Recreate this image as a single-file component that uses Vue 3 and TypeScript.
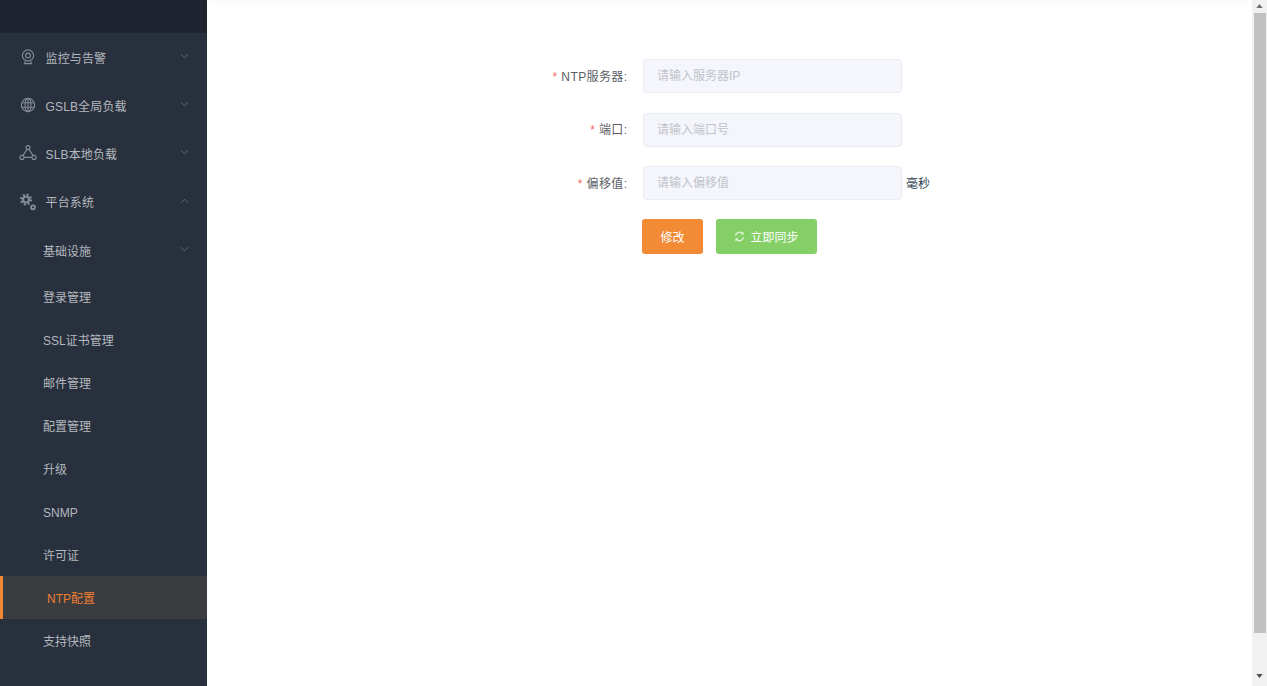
<script setup lang="ts">
interface Top { label: string; icon: string; open?: boolean }
const tops: Top[] = [
  { label: '监控与告警', icon: 'cam' },
  { label: 'GSLB全局负载', icon: 'globe' },
  { label: 'SLB本地负载', icon: 'nodes' },
  { label: '平台系统', icon: 'gear', open: true },
]
const subs = ['登录管理', 'SSL证书管理', '邮件管理', '配置管理', '升级', 'SNMP', '许可证', 'NTP配置', '支持快照']
const fields = [
  { label: 'NTP服务器:', ph: '请输入服务器IP' },
  { label: '端口:', ph: '请输入端口号' },
  { label: '偏移值:', ph: '请输入偏移值', suffix: '毫秒' },
]
</script>

<template>
  <div class="page">
    <aside class="side">
      <div class="brand"></div>
      <div v-for="t in tops" :key="t.label" class="top">
        <svg class="ico" viewBox="0 0 18 18" fill="none" stroke="#858c97" stroke-width="1.1">
          <template v-if="t.icon === 'cam'">
            <circle cx="9" cy="7.5" r="5.6" />
            <circle cx="9" cy="7.5" r="2.4" />
            <path d="M6 13v2.6h6V13M4.8 15.8h8.4" />
          </template>
          <template v-else-if="t.icon === 'globe'">
            <circle cx="9" cy="9" r="6.6" />
            <ellipse cx="9" cy="9" rx="3" ry="6.6" />
            <path d="M2.6 6.8h12.8M2.6 11.2h12.8M9 2.4v13.2" />
          </template>
          <template v-else-if="t.icon === 'nodes'">
            <circle cx="9" cy="3.6" r="2" />
            <circle cx="3" cy="13.4" r="2" />
            <circle cx="15" cy="13.4" r="2" />
            <path d="M8 5.4 3.9 11.6M10 5.4l4.1 6.2M5 13.4h8" />
          </template>
          <template v-else>
            <circle cx="7" cy="6.5" r="5" stroke-width="2" stroke-dasharray="2 1.93" />
            <circle cx="7" cy="6.5" r="3" stroke-width="2.2" />
            <circle cx="14" cy="14.3" r="2" stroke-width="1.7" />
          </template>
        </svg>
        <span class="top-label">{{ t.label }}</span>
        <svg class="chev" :class="{ up: t.open }" viewBox="0 0 10 6" fill="none" stroke="#69707b" stroke-width="1">
          <path d="M1 1l4 4 4-4" />
        </svg>
      </div>
      <div class="top sub-head">
        <span class="sub-label">基础设施</span>
        <svg class="chev" viewBox="0 0 10 6" fill="none" stroke="#69707b" stroke-width="1">
          <path d="M1 1l4 4 4-4" />
        </svg>
      </div>
      <div v-for="s in subs" :key="s" class="sub" :class="{ active: s === 'NTP配置' }">{{ s }}</div>
    </aside>

    <main class="main">
      <div class="topbar"></div>
      <form class="form" @submit.prevent>
        <div v-for="f in fields" :key="f.label" class="row">
          <label class="lbl"><i>*</i> {{ f.label }}</label>
          <input class="inp" :placeholder="f.ph" />
          <span v-if="f.suffix" class="suffix">{{ f.suffix }}</span>
        </div>
        <div class="btns">
          <button type="button" class="btn orange">修改</button>
          <button type="button" class="btn green">
            <svg class="sync" viewBox="0 0 12 12" fill="none" stroke="#e4f5df" stroke-width="1.3">
              <path d="M1.6 5.2A4.5 4.5 0 0 1 9.6 3.1M10.4 6.8A4.5 4.5 0 0 1 2.4 8.9" />
              <path d="M10 .9v2.6H7.4M2 11.1V8.5h2.6" stroke-width="1" />
            </svg>
            立即同步
          </button>
        </div>
      </form>
    </main>

    <div class="scroll">
      <svg class="arrow" viewBox="0 0 8 5"><path d="M4 0l4 5H0z" fill="#6f6f6f" /></svg>
      <div class="thumb"></div>
      <svg class="arrow down" viewBox="0 0 8 5"><path d="M4 5 0 0h8z" fill="#4f4f4f" /></svg>
    </div>
  </div>
</template>

<style>
html, body { margin: 0; overflow: hidden; background: #fff; }
</style>

<style scoped>
.page {
  display: flex;
  height: 686px;
  font-family: "Liberation Sans", "Noto Sans CJK SC", sans-serif;
  font-size: 12px;
  overflow: hidden;
}
.side {
  width: 207px;
  flex: none;
  background: #28303e;
  color: #b4b8bd;
  overflow: hidden;
}
.brand { height: 33px; background: #1f2430; }
.top {
  height: 48.2px;
  display: flex;
  align-items: center;
  padding-left: 19px;
  position: relative;
}
.ico { width: 18px; height: 18px; flex: none; margin-right: 8.5px; }
.top-label { letter-spacing: 0.15px; }
.chev {
  position: absolute;
  left: 180px;
  top: 20px;
  width: 9px;
  height: 6px;
}
.chev.up { transform: rotate(180deg); }
.sub-head { padding-left: 43px; }
.sub-label { margin-top: 2px; }
.sub {
  height: 43px;
  line-height: 47px;
  padding-left: 43px;
  box-sizing: border-box;
}
.sub-head + .sub { margin-top: 1.5px; }
.active {
  background: #3b3c40;
  color: #ed7f33;
  border-left: 3px solid #f28a35;
  padding-left: 44px;
}
.main { flex: 1; position: relative; min-width: 0; }
.topbar {
  height: 1px;
  margin-top: -1px;
  box-shadow: 0 1px 8px rgba(0, 21, 41, 0.16);
}
.form { padding: 59px 0 0 330px; }
.row {
  display: flex;
  align-items: center;
  height: 34px;
  margin-bottom: 19.5px;
}
.lbl {
  width: 90.5px;
  margin: -2px 15.5px 0 0;
  text-align: right;
  color: #5a5e66;
  white-space: nowrap;
  letter-spacing: 0.4px;
}
.lbl i { color: #f56c6c; font-style: normal; }
.inp {
  width: 259px;
  height: 34px;
  box-sizing: border-box;
  padding: 0 13px;
  background: #f5f6fb;
  border: 1px solid #e9ebf2;
  border-radius: 4px;
  font: inherit;
  outline: none;
}
.inp::placeholder { color: #bfc3cb; opacity: 1; }
.suffix { margin: -2px 0 0 4px; color: #2f4050; }
.btns {
  display: flex;
  gap: 13px;
  margin: -0.5px 0 0 105px;
}
.btn {
  height: 35px;
  border: 0;
  border-radius: 3px;
  color: #fff;
  font: inherit;
  display: flex;
  align-items: center;
  justify-content: center;
}
.orange { width: 61px; background: #f38a36; }
.green { width: 101px; background: #85d066; }
.sync { width: 11px; height: 11px; margin-right: 5px; }
.scroll {
  width: 15px;
  flex: none;
  background: #f1f1f1;
  display: flex;
  flex-direction: column;
  align-items: center;
}
.arrow { width: 7px; height: 4px; margin-top: 4px; flex: none; }
.thumb {
  width: 12px;
  height: 620px;
  margin-top: 5px;
  background: #c1c1c1;
}
.arrow.down { margin-top: 41px; }
</style>
